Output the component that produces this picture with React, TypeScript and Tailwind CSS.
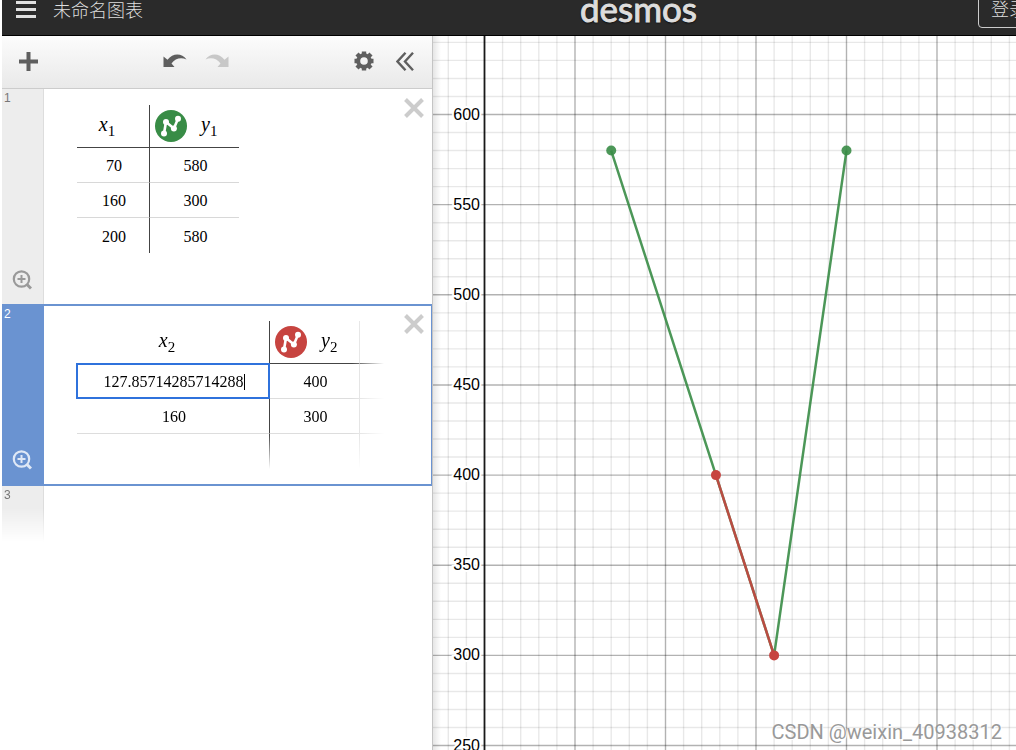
import type { ReactNode } from "react";

const GREEN = "#388c46";
const RED = "#c74440";

// graph scale, in pixels from the left top corner of the paper
const ORIGIN_X = 51.5;
const TOP_Y = 78.5; // y = 600
const STEP_X = 18.1;
const STEP_Y = 18.03;

const toX = (x: number) => ORIGIN_X + (x / 10) * STEP_X;
const toY = (y: number) => TOP_Y + ((600 - y) / 10) * STEP_Y;

const columns = Array.from({ length: 120 }, (_, i) => i - 2);
const rows = Array.from({ length: 90 }, (_, i) => i - 4);
const yLabels = [600, 550, 500, 450, 400, 350, 300, 250, 200, 150, 100, 50];

function PlotBadge({ color }: { color: string }) {
    return (
        <button type="button" aria-label="Line style" className="block shrink-0 cursor-pointer">
            <svg width="32" height="32" viewBox="0 0 32 32">
                <circle cx="16" cy="16" r="16" fill={color} />
                <path d="M9 23.5 11 12 18.9 18.5 23 8.8" fill="none" stroke="#fff" strokeWidth="2.6" />
                <g fill="#fff">
                    <circle cx="9" cy="23.5" r="3" />
                    <circle cx="11" cy="12" r="3" />
                    <circle cx="18.9" cy="18.5" r="3" />
                    <circle cx="23" cy="8.8" r="3" />
                </g>
            </svg>
        </button>
    );
}

function Variable({ name, index }: { name: string; index: number }) {
    return (
        <span className="inline-block pb-1 text-[20px] leading-5 whitespace-nowrap">
            <i>{name}</i>
            <sub className="text-[15px] bottom-[-5px]">{index}</sub>
        </span>
    );
}

function ZoomFit() {
    return (
        <button type="button" aria-label="Zoom fit" className="ml-[10px] mb-[14px] w-5 cursor-pointer">
            <svg width="20" height="20" viewBox="0 0 20 20" fill="none" stroke="currentColor">
                <circle cx="9.5" cy="9" r="7.7" strokeWidth="2.2" />
                <path d="M9.5 5v8M5.5 9h8" strokeWidth="2" />
                <path d="M15 14.5 19 18.5" strokeWidth="3" />
            </svg>
        </button>
    );
}

function DeleteButton() {
    return (
        <button type="button" aria-label="Delete" className="mr-[7px] h-5 w-5 cursor-pointer">
            <svg width="20" height="20" viewBox="0 0 20 20" stroke="#ccc" strokeWidth="4">
                <path d="M1.5 1.5 18.5 18.5M18.5 1.5 1.5 18.5" />
            </svg>
        </button>
    );
}

function Gutter({ index, active, children }: { index: number; active?: boolean; children?: ReactNode }) {
    return (
        <div
            className={
                active
                    ? "flex w-[42px] shrink-0 flex-col justify-between bg-[#6a93d1] text-[#dfe8f6]"
                    : "flex w-[42px] shrink-0 flex-col justify-between border-r border-[#ddd] bg-[#ededed] text-[#999]"
            }
        >
            <span className={active ? "pl-[2px] text-xs text-white" : "pl-[2px] pt-px text-xs text-[#777]"}>
                {index}
            </span>
            {children}
        </div>
    );
}

function Toolbar() {
    return (
        <div className="flex h-[53px] items-center border-b border-[#ccc] bg-linear-to-b from-[#fcfcfc] to-[#e9e9e9] pb-0.5 text-[#5f5f5f]">
            <button type="button" aria-label="Add item" className="ml-[17px] cursor-pointer">
                <svg width="19" height="19" viewBox="0 0 19 19" stroke="currentColor" strokeWidth="4">
                    <path d="M9.5 0v19M0 9.5h19" />
                </svg>
            </button>
            <div className="flex flex-1 justify-center gap-[18px]">
                <button type="button" aria-label="Undo" className="cursor-pointer">
                    <svg width="24" height="18" viewBox="0 0 24 18" fill="currentColor">
                        <path d="M.5 4.500v10.500h11l-3-3.500C12 6.500 18 5 23.500 7.500 19 1 10 .5 4.500 7.800Z" />
                    </svg>
                </button>
                <button type="button" aria-label="Redo" disabled className="text-[#c8c8c8]">
                    <svg width="24" height="18" viewBox="0 0 24 18" fill="currentColor">
                        <path d="M23.500 4.500v10.500h-11l3-3.500C12 6.500 6 5 .5 7.500 5 1 14 .5 19.500 7.800Z" />
                    </svg>
                </button>
            </div>
            <button type="button" aria-label="Settings" className="cursor-pointer">
                <svg width="20" height="20" viewBox="-10 -10 20 20" stroke="currentColor">
                    <circle r="5.8" fill="none" strokeWidth="4" />
                    <path
                        d="M0-9.500V-6M0 9.500V6M-9.500 0H-6M9.500 0H6M-7-7-5-5M7 7 5 5M7-7 5-5M-7 7-5 5"
                        strokeWidth="4.400"
                    />
                </svg>
            </button>
            <button type="button" aria-label="Hide list" className="ml-[22px] mr-[17px] cursor-pointer">
                <svg width="19" height="19" viewBox="0 0 19 19" fill="none" stroke="currentColor" strokeWidth="2.4">
                    <path d="M9.500 .8 1.500 9.500l8 8.700M17 .8 9 9.500l8 8.700" />
                </svg>
            </button>
        </div>
    );
}

function FirstTable() {
    const data = [
        [70, 580],
        [160, 300],
        [200, 580],
    ];
    return (
        <table className="table-fixed border-separate border-spacing-0 text-center text-base leading-5">
            <thead>
                <tr className="h-[43px]">
                    <th className="w-[73px] border-r border-b border-[#444] p-0 pr-3 font-normal">
                        <Variable name="x" index={1} />
                    </th>
                    <th className="w-[89px] border-b border-[#444] p-0 font-normal">
                        <div className="flex items-center gap-[14px] pl-[5px]">
                            <PlotBadge color={GREEN} />
                            <Variable name="y" index={1} />
                        </div>
                    </th>
                </tr>
            </thead>
            <tbody>
                {data.map(([x, y], i) => (
                    <tr key={x} className="h-[35px]">
                        <td
                            className={
                                i < 2
                                    ? "border-r border-b border-r-[#444] border-b-[#d8d8d8] p-0 pt-0.5 pl-0.5"
                                    : "border-r border-[#444] p-0 pt-0.5 pl-0.5"
                            }
                        >
                            {x}
                        </td>
                        <td
                            className={
                                i < 2 ? "border-b border-[#d8d8d8] p-0 pt-0.5 pl-0.5" : "p-0 pt-0.5 pl-0.5"
                            }
                        >
                            {y}
                        </td>
                    </tr>
                ))}
            </tbody>
        </table>
    );
}

function SecondTable() {
    return (
        <table className="table-fixed border-separate border-spacing-0 text-center text-base leading-5">
            <thead>
                <tr className="h-[43px]">
                    <th className="w-[193px] border-r border-b border-[#444] p-0 pr-3 font-normal">
                        <Variable name="x" index={2} />
                    </th>
                    <th className="w-[90px] border-r border-b border-r-[#e0e0e0] border-b-[#444] p-0 font-normal">
                        <div className="flex items-center gap-[14px] pl-[5px]">
                            <PlotBadge color={RED} />
                            <Variable name="y" index={2} />
                        </div>
                    </th>
                    <td className="w-6 border-b border-[#444] p-0" />
                </tr>
            </thead>
            <tbody>
                <tr className="h-[35px]">
                    <td className="relative border-r border-b border-r-[#444] border-b-[#ddd] p-0">
                        {/* focused cell */}
                        <div className="absolute -inset-px flex items-center justify-center border-2 border-[#2f72dc] bg-white pt-0.5 pl-0.5">
                            <input
                                aria-label="x2 value"
                                defaultValue="127.85714285714288"
                                className="[field-sizing:content] border-0 bg-transparent p-0 text-base leading-5 outline-none"
                            />
                            <span className="h-4 w-px bg-black" />
                        </div>
                    </td>
                    <td className="border-r border-b border-[#ddd] p-0 pt-0.5 pl-0.5">400</td>
                    <td className="border-b border-[#ddd] p-0" />
                </tr>
                <tr className="h-[35px]">
                    <td className="border-r border-b border-r-[#444] border-b-[#ddd] p-0 pt-0.5 pl-0.5">160</td>
                    <td className="border-r border-b border-[#ddd] p-0 pt-0.5 pl-0.5">300</td>
                    <td className="border-b border-[#ddd] p-0" />
                </tr>
                <tr className="h-[35px]">
                    <td className="border-r border-[#444] p-0" />
                    <td className="border-r border-[#ddd] p-0" />
                    <td className="p-0" />
                </tr>
            </tbody>
        </table>
    );
}

function Graph() {
    return (
        <main className="relative min-w-0 flex-1 overflow-hidden bg-white">
            <svg width="100%" height="100%" className="absolute inset-0">
                <g stroke="#000">
                    {columns.map((i) => (
                        <line
                            key={i}
                            x1={toX(i * 10)}
                            x2={toX(i * 10)}
                            y1="0"
                            y2="100%"
                            strokeWidth={i === 0 ? 1.8 : 1.4}
                            strokeOpacity={i === 0 ? 0.9 : i % 5 === 0 ? 0.3 : 0.09}
                        />
                    ))}
                    {rows.map((i) => (
                        <line
                            key={i}
                            x1="0"
                            x2="100%"
                            y1={toY(600 - i * 10)}
                            y2={toY(600 - i * 10)}
                            strokeWidth="1.4"
                            strokeOpacity={i % 5 === 0 ? 0.3 : 0.09}
                        />
                    ))}
                </g>
                <g
                    className="font-['Liberation_Sans',sans-serif] text-[16px]"
                    textAnchor="end"
                    stroke="#fff"
                    strokeWidth="4"
                    paintOrder="stroke"
                >
                    {yLabels.map((y) => (
                        <text key={y} x="47" y={toY(y) + 5}>
                            {y}
                        </text>
                    ))}
                </g>
                <g fill={GREEN} stroke={GREEN} strokeOpacity="0.9" fillOpacity="0.9">
                    <polyline
                        points={`${toX(70)},${toY(580)} ${toX(160)},${toY(300)} ${toX(200)},${toY(580)}`}
                        fill="none"
                        strokeWidth="2.5"
                    />
                    <circle cx={toX(70)} cy={toY(580)} r="5" stroke="none" />
                    <circle cx={toX(200)} cy={toY(580)} r="5" stroke="none" />
                </g>
                <g fill={RED} stroke={RED}>
                    <line
                        x1={toX(127.857)}
                        y1={toY(400)}
                        x2={toX(160)}
                        y2={toY(300)}
                        strokeWidth="2.5"
                        strokeOpacity="0.9"
                    />
                    <circle cx={toX(127.857)} cy={toY(400)} r="5" stroke="none" />
                    <circle cx={toX(160)} cy={toY(300)} r="5" stroke="none" />
                </g>
            </svg>
            {/* shadow of the list */}
            <div className="absolute inset-y-0 left-0 w-2 bg-linear-to-r from-black/10 to-transparent" />
            <p className="absolute right-[14px] bottom-[6px] font-['Roboto',sans-serif] text-[20px] leading-6 text-[#999] [text-shadow:1px_1px_0_#fff]">
                CSDN @weixin_40938312
            </p>
        </main>
    );
}

export default function App() {
    return (
        <div className="flex min-h-screen flex-col bg-white pl-[2px] font-['Liberation_Sans','Noto_Sans_CJK_SC',sans-serif] text-black">
            {/* Header */}
            <header className="h-9 overflow-hidden border-b border-black bg-[#2a2a2a] text-[#ddd]">
                <div className="flex h-5 items-center">
                    <div className="flex w-[578px] shrink-0 items-center">
                        <button type="button" aria-label="Menu" className="ml-[14px] cursor-pointer">
                            <svg width="20" height="18" viewBox="0 0 20 18" fill="#e0e0e0">
                                <path d="M0 0h20v3H0zM0 7h20v3H0zM0 14h20v3H0z" />
                            </svg>
                        </button>
                        <h1 className="ml-[17px] pt-0.5 text-[18px] leading-5 font-light">未命名图表</h1>
                    </div>
                    <span className="pb-1 font-['Lato',sans-serif] text-[35px] leading-4 [-webkit-text-stroke:1px_#ddd] [text-shadow:0_1px_2px_#000]">
                        desmos
                    </span>
                    <button
                        type="button"
                        className="-mr-6 ml-auto h-[35px] shrink-0 cursor-pointer rounded border border-[#ccc] px-3 text-[18px] leading-5 font-light"
                    >
                        登录
                    </button>
                </div>
            </header>

            <div className="flex flex-1">
                {/* Expression list */}
                <aside className="w-[431px] shrink-0 border-r border-[#c4c4c4] bg-white">
                    <Toolbar />
                    <section className="flex border-r border-white">
                        <Gutter index={1}>
                            <ZoomFit />
                        </Gutter>
                        <div className="flex flex-1 items-start justify-between pt-[9px] pb-[51px] pl-[33px]">
                            <div className="pt-[7px] font-['Liberation_Serif',serif]">
                                <FirstTable />
                            </div>
                            <DeleteButton />
                        </div>
                    </section>
                    <section className="flex border-y-2 border-r border-[#6a93d1]">
                        <Gutter index={2} active>
                            <ZoomFit />
                        </Gutter>
                        <div className="flex flex-1 items-start justify-between pt-2 pb-[15px] pl-[33px]">
                            <div className="-ml-px pl-px pt-[7px] font-['Liberation_Serif',serif] [mask-composite:intersect] [mask-image:linear-gradient(to_right,#000_calc(100%-32px),transparent),linear-gradient(to_bottom,#000_calc(100%-35px),transparent)]">
                                <SecondTable />
                            </div>
                            <DeleteButton />
                        </div>
                    </section>
                    <section className="flex h-14 [mask-image:linear-gradient(to_bottom,#000_40%,transparent)]">
                        <Gutter index={3} />
                    </section>
                </aside>

                <Graph />
            </div>
        </div>
    );
}
